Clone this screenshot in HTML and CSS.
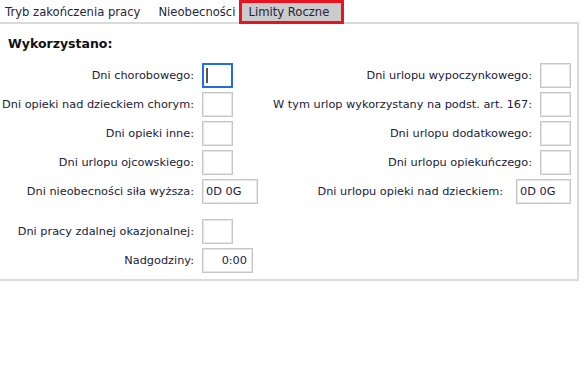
FILE: index.html
```html
<!DOCTYPE html>
<html lang="pl">
<head>
    <meta charset="UTF-8">
    <meta name="viewport" content="width=device-width, initial-scale=1.0">
    <title>Limity Roczne</title>
    <link rel="stylesheet" href="styles.css">
</head>
<body>
    <div class="tabs">
        <div class="tab">Tryb zakończenia pracy</div>
        <div class="tab">Nieobecności</div>
        <div class="tab active">Limity Roczne</div>
    </div>

    <div class="panel">
        <h3 class="group-title">Wykorzystano:</h3>

        <div class="columns">
            <div class="col-left">
                <label class="field-label">Dni chorobowego:</label>
                <div class="box focused"><span class="caret"></span></div>

                <label class="field-label">Dni opieki nad dzieckiem chorym:</label>
                <div class="box"></div>

                <label class="field-label">Dni opieki inne:</label>
                <div class="box"></div>

                <label class="field-label">Dni urlopu ojcowskiego:</label>
                <div class="box"></div>

                <label class="field-label">Dni nieobecności siła wyższa:</label>
                <div class="box wide">0D 0G</div>
            </div>

            <div class="col-right">
                <div class="field">
                    <label class="field-label">Dni urlopu wypoczynkowego:</label>
                    <div class="box"></div>
                </div>
                <div class="field">
                    <label class="field-label">W tym urlop wykorzystany na podst. art. 167:</label>
                    <div class="box"></div>
                </div>
                <div class="field">
                    <label class="field-label">Dni urlopu dodatkowego:</label>
                    <div class="box"></div>
                </div>
                <div class="field">
                    <label class="field-label">Dni urlopu opiekuńczego:</label>
                    <div class="box"></div>
                </div>
                <div class="field field-wide">
                    <label class="field-label">Dni urlopu opieki nad dzieckiem:</label>
                    <div class="box wide-right">0D 0G</div>
                </div>
            </div>
        </div>

        <div class="col-left extra">
            <label class="field-label">Dni pracy zdalnej okazjonalnej:</label>
            <div class="box"></div>

            <label class="field-label">Nadgodziny:</label>
            <div class="box time">0:00</div>
        </div>
    </div>
</body>
</html>
```

FILE: styles.css
```css
body {
    font-family: "DejaVu Sans", Verdana, sans-serif;
    font-size: 11.3px;
    margin: 0;
    padding: 0;
    background-color: #fff;
    color: #202038;
}
.tabs {
    display: flex;
    height: 22px;
    font-size: 11.6px;
}
.tab {
    box-sizing: border-box;
    height: 22px;
    padding: 2px 9px 0;
    line-height: 20px;
    white-space: nowrap;
    color: #24243a;
}
.tab:first-child {
    padding-left: 5px;
}
.tab.active {
    position: relative;
    z-index: 1;
    height: 24px;
    margin-left: -5px;
    padding: 0 12px 0 6px;
    line-height: 18px;
    background-color: #cbcbcb;
    border: 3px solid #e8141f;
}
.panel {
    box-sizing: border-box;
    width: 579px;
    padding: 13px 6px 6px 0;
    border-top: 2px solid #dadada;
    border-right: 2px solid #dadada;
    border-bottom: 2px solid #dadada;
}
.group-title {
    margin: 0 0 12px 8px;
    font-size: 12.5px;
    line-height: 14px;
    font-weight: bold;
    color: #111;
}
.columns {
    display: flex;
}
.col-left {
    display: grid;
    grid-template-columns: 194px auto;
    column-gap: 8px;
    row-gap: 4px;
    align-items: center;
    justify-items: start;
    align-content: start;
}
.col-left .field-label {
    justify-self: end;
}
.col-right {
    flex: 1;
    display: flex;
    flex-direction: column;
    gap: 4px;
}
.field {
    display: flex;
    justify-content: flex-end;
    align-items: center;
    gap: 8px;
}
.field-wide {
    gap: 13px;
}
.field-label {
    white-space: nowrap;
}
.box {
    box-sizing: border-box;
    display: flex;
    align-items: center;
    width: 31px;
    height: 25px;
    padding: 0 3px;
    border: 1px solid #c6c6c6;
    box-shadow: inset 0 0 0 1px #e6e6e6;
    background: #fff;
    color: #1a1a48;
    white-space: nowrap;
}
.box.focused {
    border: 2px solid #1f6ee4;
    box-shadow: none;
    padding: 0 2px;
}
.caret {
    width: 2px;
    height: 15px;
    background-color: #555;
}
.box.wide {
    width: 56px;
}
.box.wide-right {
    width: 55px;
}
.box.time {
    width: 51px;
    justify-content: flex-end;
    padding-right: 5px;
}
.extra {
    margin-top: 15px;
}
```
